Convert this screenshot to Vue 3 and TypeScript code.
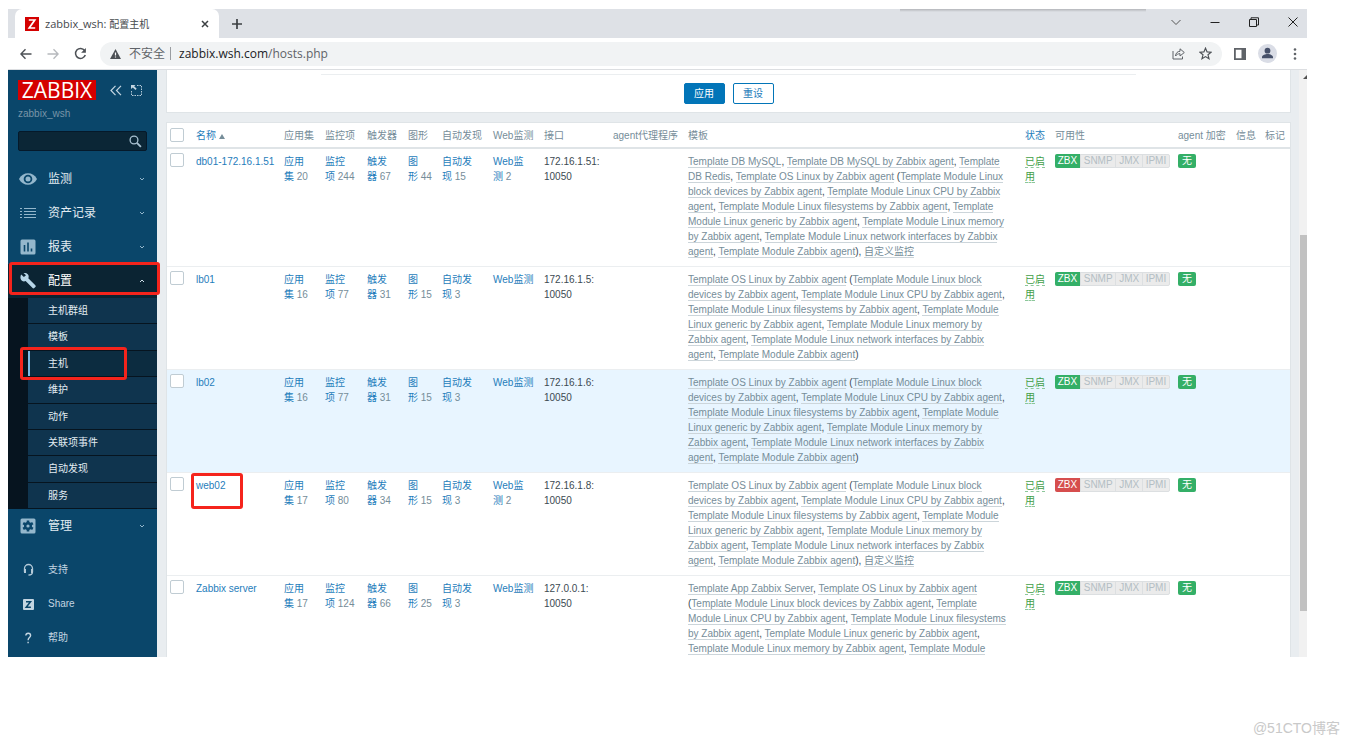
<script setup lang="ts">
interface Host {
  name: string
  apps: number
  items: number
  triggers: number
  graphs: number
  discovery: number
  web?: number
  ip: string
  templates: string
  down?: boolean
  hover?: boolean
  marked?: boolean
}

const modules = ['block devices', 'CPU', 'filesystems', 'generic', 'memory', 'network interfaces']
  .map((m) => `Template Module Linux ${m} by Zabbix agent`)
  .join(', ')
const linux = `Template OS Linux by Zabbix agent (${modules}, Template Module Zabbix agent)`

const hosts: Host[] = [
  { name: 'db01-172.16.1.51', apps: 20, items: 244, triggers: 67, graphs: 44, discovery: 15, web: 2, ip: '172.16.1.51', templates: `Template DB MySQL, Template DB MySQL by Zabbix agent, Template DB Redis, ${linux}, 自定义监控` },
  { name: 'lb01', apps: 16, items: 77, triggers: 31, graphs: 15, discovery: 3, ip: '172.16.1.5', templates: linux },
  { name: 'lb02', apps: 16, items: 77, triggers: 31, graphs: 15, discovery: 3, ip: '172.16.1.6', templates: linux, hover: true },
  { name: 'web02', apps: 17, items: 80, triggers: 34, graphs: 15, discovery: 3, web: 2, ip: '172.16.1.8', templates: `${linux}, 自定义监控`, down: true, marked: true },
  { name: 'Zabbix server', apps: 17, items: 124, triggers: 66, graphs: 25, discovery: 3, ip: '127.0.0.1', templates: `Template App Zabbix Server, ${linux}` },
]

const split = (s: string): string[] => s.split(/(Template [^,()]*[^,() ]|自定义监控)/).filter(Boolean)
const isLink = (s: string): boolean => /^(Template|自)/.test(s)

const topMenu = [
  { label: '监测', icon: 'eye' },
  { label: '资产记录', icon: 'list' },
  { label: '报表', icon: 'chart' },
]
const subMenu = ['主机群组', '模板', '主机', '维护', '动作', '关联项事件', '自动发现', '服务']
const nb = '\u00a0'
</script>

<template>
  <div class="page">
    <div class="window">
      <header class="tabs">
        <div class="tab">
          <svg class="favicon" viewBox="0 0 14 14"><rect width="14" height="14" fill="#d40000" /><path d="M3.8 3h6L4.200 11h6" fill="none" stroke="#fff" stroke-width="1.7" /></svg>
          <span class="tab-title">zabbix_wsh: <small>配置主机</small></span>
          <button class="icon-btn" aria-label="关闭标签页"><svg width="8" height="8" viewBox="0 0 8 8"><path d="M1 1l6 6M7 1L1 7" stroke="#3c4043" stroke-width="1.5" /></svg></button>
        </div>
        <button class="icon-btn plus" aria-label="新标签页"><svg width="12" height="12" viewBox="0 0 12 12"><path d="M6 1v10M1 6h10" stroke="#3c4043" stroke-width="1.7" /></svg></button>
        <div class="shade"></div>
        <div class="win-btns">
          <button class="icon-btn" aria-label="搜索标签页"><svg width="10" height="10" viewBox="0 0 10 10"><path d="M.5 3L5 7.500 9.500 3" fill="none" stroke="#555" /></svg></button>
          <button class="icon-btn" aria-label="最小化"><svg width="10" height="10" viewBox="0 0 10 10"><path d="M.5 5.500h9" stroke="#222" /></svg></button>
          <button class="icon-btn" aria-label="还原"><svg width="10" height="10" viewBox="0 0 10 10"><path d="M.5 2.500h7v7h-7zM2 2.500V.8h7.500V8h-2" fill="none" stroke="#222" /></svg></button>
          <button class="icon-btn" aria-label="关闭"><svg width="10" height="10" viewBox="0 0 10 10"><path d="M.5.5l9 9M9.500.5l-9 9" stroke="#222" /></svg></button>
        </div>
      </header>

      <div class="toolbar">
        <div class="nav-btns">
          <button class="icon-btn" aria-label="后退"><svg width="12" height="12" viewBox="0 0 12 12"><path d="M11.500 6H1M5.500 1.200L.9 6l4.600 4.800" fill="none" stroke="#4d5156" stroke-width="1.400" /></svg></button>
          <button class="icon-btn" aria-label="前进"><svg width="12" height="12" viewBox="0 0 12 12"><path d="M.5 6H11M6.500 1.200L11.100 6l-4.600 4.800" fill="none" stroke="#b6b9bd" stroke-width="1.300" /></svg></button>
          <button class="icon-btn" aria-label="刷新"><svg width="13" height="13" viewBox="0 0 13 13"><path d="M10.600 3.500A5 5 0 1 0 11.300 8" fill="none" stroke="#4d5156" stroke-width="1.500" /><path d="M11.900.9v4.800H7.100z" fill="#4d5156" /></svg></button>
        </div>
        <div class="address">
          <svg width="11" height="10" viewBox="0 0 11 10"><path d="M5.500 0L11 10H0z" fill="#4d5156" /><path d="M5.500 3.500v3M5.500 7.400v1.200" stroke="#fff" stroke-width="1.200" /></svg>
          <span class="unsafe">不安全</span><span class="bar"></span>
          <span class="url">zabbix.wsh.com<i>/hosts.php</i></span>
          <span class="addr-right">
            <svg width="13" height="13" viewBox="0 0 13 13"><path d="M1 4v8h9.500V9.500" fill="none" stroke="#5f6368" /><path d="M3.500 9c.3-3 2-4.600 4.500-4.700V1.800L12.300 5.500 8 9V6.700C6 6.700 4.800 7.400 3.500 9z" fill="none" stroke="#5f6368" /></svg>
            <svg width="13" height="13" viewBox="0 0 13 13"><path d="M6.500 1.200l1.600 3.700 4 .3-3.100 2.600 1 3.900-3.500-2.100L3 11.700l1-3.900L.9 5.200l4-.3z" fill="none" stroke="#4d5156" stroke-width="1.200" /></svg>
          </span>
        </div>
        <svg class="panel-ico" width="12" height="12" viewBox="0 0 12 12"><path d="M0 0h12v12H0zM1.800 1.800v8.400H7.500V1.800z" fill="#5f6368" fill-rule="evenodd" /></svg>
        <svg class="avatar" width="19" height="19" viewBox="0 0 19 19"><circle cx="9.500" cy="9.500" r="9.500" fill="#dadde6" /><circle cx="9.500" cy="6.700" r="2.900" fill="#465069" /><path d="M4 14.300v-1.200c0-2 3.600-3 5.500-3s5.500 1 5.500 3v1.200z" fill="#465069" /></svg>
        <button class="icon-btn" aria-label="菜单"><svg width="4" height="12" viewBox="0 0 4 12" fill="#5f6368"><circle cx="2" cy="1.500" r="1.300" /><circle cx="2" cy="6" r="1.300" /><circle cx="2" cy="10.500" r="1.300" /></svg></button>
      </div>

      <div class="content">
        <aside class="sidebar">
          <div class="brand">
            <a href="#" class="logo">ZABBIX</a>
            <button class="icon-btn" aria-label="收起侧边栏"><svg width="12" height="11" viewBox="0 0 12 11"><path d="M5.500.8L1 5.500l4.500 4.700M11 .8L6.500 5.500l4.500 4.700" fill="none" stroke="#c3d5e1" stroke-width="1.200" /></svg></button>
            <button class="icon-btn" aria-label="隐藏侧边栏"><svg width="11" height="11" viewBox="0 0 11 11"><path d="M6 .5h4.500v10H.5V6" fill="none" stroke="#b4cad8" stroke-dasharray="1.500 1" /><path d="M0 0h4.500L3.200 1.300l2.500 2.500-1.200 1.200-2.700-2.600L0 4z" fill="#c3d5e1" /></svg></button>
          </div>
          <div class="server">zabbix_wsh</div>
          <form class="search" @submit.prevent>
            <input type="text" aria-label="搜索" />
            <button class="icon-btn" aria-label="搜索"><svg width="13" height="13" viewBox="0 0 13 13"><circle cx="5" cy="5" r="3.900" fill="none" stroke="#a9c2d2" stroke-width="1.300" /><path d="M7.900 7.900l4 4" stroke="#a9c2d2" stroke-width="1.800" /></svg></button>
          </form>
          <nav>
            <a v-for="m in topMenu" :key="m.label" href="#" class="menu">
              <svg v-if="m.icon === 'eye'" viewBox="0 0 20 16"><path d="M1 8C4.500.3 15.500.3 19 8c-3.500 7.700-14.500 7.700-18 0z" fill="#94b7cc" /><circle cx="10" cy="8" r="4.300" fill="#0a466a" /><circle cx="10" cy="8" r="2.500" fill="#94b7cc" /></svg>
              <svg v-else-if="m.icon === 'list'" viewBox="0 0 20 16"><path d="M2 3.500h2M6 3.500h12M2 6.500h2M6 6.500h12M2 9.500h2M6 9.500h12M2 12.500h2M6 12.500h12" stroke="#94b7cc" stroke-width="1.200" /></svg>
              <svg v-else viewBox="0 0 20 16"><rect x="2.500" y=".5" width="15" height="15" rx="1.500" fill="#94b7cc" /><path d="M6.500 6v6.500M10 3.500v9M13.500 9.500v3" stroke="#0a466a" stroke-width="1.600" /></svg>
              <span>{{ m.label }}</span>
              <svg class="chev" viewBox="0 0 6 4"><path d="M1 1l2 2 2-2" fill="none" stroke="#94b7cc" /></svg>
            </a>
            <a href="#" class="menu open">
              <svg viewBox="0 0 20 16"><path d="M3.200 1.500l2.700 2.600L8 2.200 5.500.1c2-.6 4.700.5 5.100 2.700.2 1 0 1.900-.3 2.500l7 7c.6.6.6 1.200 0 1.700l-1 1.100c-.6.5-1.200.5-1.700 0l-7-7.100C5.500 9 3.400 7.900 2.700 5.900c-.5-1.500-.3-3.200.5-4.400z" fill="#b7d6e8" /></svg>
              <span>配置</span>
              <svg class="chev" viewBox="0 0 6 4"><path d="M1 3l2-2 2 2" fill="none" stroke="#cfe0ea" /></svg>
            </a>
            <ul class="sub">
              <li v-for="s in subMenu" :key="s" :class="{ current: s === '主机' }"><a href="#">{{ s }}</a></li>
            </ul>
            <a href="#" class="menu">
              <svg viewBox="0 0 20 16"><rect x="2.500" y=".5" width="15" height="15" rx="1.500" fill="#94b7cc" /><circle cx="10" cy="8" r="4" fill="#0a466a" /><path d="M10 2.500v11M5.200 5.200l9.600 5.600M14.800 5.200l-9.600 5.600" stroke="#0a466a" stroke-width="2.600" /><circle cx="10" cy="8" r="1.600" fill="#94b7cc" /></svg>
              <span>管理</span>
              <svg class="chev" viewBox="0 0 6 4"><path d="M1 1l2 2 2-2" fill="none" stroke="#94b7cc" /></svg>
            </a>
            <div class="extra">
              <a href="#" class="menu small"><svg viewBox="0 0 20 16"><path d="M6.500 10V6.500a4 4 0 0 1 8 0V10c0 2-1.500 3-4 3" fill="none" stroke="#b4cad8" stroke-width="1.300" /><path d="M6 7h2v4H6zM13 7h2v4h-2z" fill="#b4cad8" /></svg><span>支持</span></a>
              <a href="#" class="menu small"><svg viewBox="0 0 20 16"><rect x="5" y="3" width="11" height="11" rx="1" fill="#c3d5e1" /><path d="M8 5.800h4.500L8.200 11.200h4.700" fill="none" stroke="#0a466a" stroke-width="1.500" /></svg><span>Share</span></a>
              <a href="#" class="menu small"><svg viewBox="0 0 20 16"><path d="M7.800 5.500c.2-3 4.800-3 4.800 0 0 2.200-2.500 2-2.500 4.700M10.100 11.700v1.600" fill="none" stroke="#c3d5e1" stroke-width="1.400" /></svg><span>帮助</span></a>
            </div>
          </nav>
        </aside>

        <main class="main">
          <section class="filter">
            <div class="rule"></div>
            <div class="filter-btns">
              <button class="btn primary">应用</button>
              <button class="btn">重设</button>
            </div>
          </section>
          <section class="list">
            <table>
              <colgroup>
                <col class="c-check" /><col class="c-name" /><col class="c-apps" /><col class="c-items" /><col class="c-apps" /><col class="c-graphs" /><col class="c-disc" /><col class="c-disc" /><col class="c-if" /><col class="c-proxy" /><col /><col class="c-status" /><col class="c-avail" /><col class="c-enc" /><col class="c-info" /><col class="c-status" />
              </colgroup>
              <thead>
                <tr>
                  <th><input type="checkbox" aria-label="全选" /></th>
                  <th><a href="#">名称<svg class="sort" viewBox="0 0 6 5"><path d="M3 0l3 5H0z" fill="#768d99" /></svg></a></th>
                  <th>应用集</th><th>监控项</th><th>触发器</th><th>图形</th><th>自动发现</th><th>Web监测</th><th>接口</th>
                  <th>agent代理程序</th><th>模板</th><th><a href="#">状态</a></th><th>可用性</th><th>agent 加密</th><th>信息</th><th>标记</th>
                </tr>
              </thead>
              <tbody>
                <tr v-for="h in hosts" :key="h.name" :class="{ hover: h.hover }">
                  <td><input type="checkbox" :aria-label="h.name" /></td>
                  <td><a href="#" :class="{ marked: h.marked }">{{ h.name }}</a></td>
                  <td><a href="#">应用集</a><sup>{{ nb + h.apps }}</sup></td>
                  <td><a href="#">监控项</a><sup>{{ nb + h.items }}</sup></td>
                  <td><a href="#">触发器</a><sup>{{ nb + h.triggers }}</sup></td>
                  <td><a href="#">图形</a><sup>{{ nb + h.graphs }}</sup></td>
                  <td><a href="#">自动发现</a><sup>{{ nb + h.discovery }}</sup></td>
                  <td><a href="#">Web监测</a><sup v-if="h.web">{{ nb + h.web }}</sup></td>
                  <td>{{ h.ip }}:<wbr />10050</td>
                  <td></td>
                  <td class="tpl"><template v-for="(p, i) in split(h.templates)" :key="i"><a v-if="isLink(p)" href="#">{{ p }}</a><template v-else>{{ p }}</template></template></td>
                  <td><a href="#" class="enabled">已启用</a></td>
                  <td><div class="avail"><span :class="h.down ? 'bad' : 'ok'">ZBX</span><span>SNMP</span><span>JMX</span><span>IPMI</span></div></td>
                  <td><span class="none">无</span></td>
                  <td></td>
                  <td></td>
                </tr>
              </tbody>
            </table>
          </section>
        </main>
        <div class="scroll"><svg class="up" viewBox="0 0 4 4"><path d="M4 0v4H0z" fill="#505050" /></svg><div class="thumb"></div></div>
      </div>
    </div>
    <footer>@51CTO博客</footer>
  </div>
</template>

<style>
body {
  background: #fff;
  overflow: hidden;
}
</style>

<style scoped>
*,
*::after {
  box-sizing: border-box;
}
.page {
  display: flex;
  flex-direction: column;
  height: 100vh;
  padding: 9px 42px 0 8px;
  font: 10px/15px "Liberation Sans", "Noto Sans CJK SC", sans-serif;
  color: #3c4a52;
}
a {
  text-decoration: none;
  color: #1f7dbb;
}
svg {
  display: block;
  flex: none;
}
.icon-btn {
  display: flex;
  align-items: center;
  justify-content: center;
  padding: 0;
  border: 0;
  background: none;
}
.window {
  flex: 1;
  min-height: 0;
  display: flex;
  flex-direction: column;
  overflow: hidden;
}
.tabs {
  position: relative;
  display: flex;
  align-items: center;
  height: 29px;
  padding-left: 7px;
  background: #dee1e6;
  flex: none;
}
.tab {
  display: flex;
  align-items: center;
  width: 204px;
  height: 29px;
  padding: 0 10px;
  background: #fff;
  border-radius: 7px 7px 0 0;
}
.favicon {
  width: 14px;
  height: 14px;
}
.tab-title {
  flex: 1;
  margin-left: 6px;
  font: 11px/16px "Open Sans", "Noto Sans CJK SC", sans-serif;
  color: #45494d;
}
.tab-title small {
  font-size: 10px;
}
.plus {
  margin-left: 12px;
}
.shade {
  position: absolute;
  top: 0;
  right: 161px;
  width: 246px;
  height: 3px;
  background: linear-gradient(#b4b6ba, #dee1e6);
}
.win-btns {
  display: flex;
  gap: 29px;
  margin-left: auto;
  padding: 0 9px 4px 0;
}
.toolbar {
  display: flex;
  align-items: center;
  height: 32px;
  padding: 0 10px 0 12px;
  border-bottom: 1px solid #dcdee1;
  background: #fff;
  flex: none;
}
.nav-btns {
  display: flex;
  gap: 15px;
}
.address {
  flex: 1;
  display: flex;
  align-items: center;
  height: 24px;
  margin: 0 12px 0 13px;
  padding: 0 10px 0 10px;
  border-radius: 12px;
  background: #f1f3f4;
  font: 12px/18px "Open Sans", "Noto Sans CJK SC", sans-serif;
}
.unsafe {
  margin-left: 8px;
  color: #5f6368;
}
.bar {
  width: 1px;
  height: 13px;
  margin: 0 8px 0 5px;
  background: #9a9da1;
}
.url {
  color: #202124;
}
.url i {
  font-style: normal;
  color: #5f6368;
}
.addr-right {
  display: flex;
  gap: 14px;
  margin-left: auto;
}
.avatar {
  margin: 0 16px 0 12px;
}
.content {
  flex: 1;
  min-height: 0;
  display: flex;
  background: #e9edf0;
}
.sidebar {
  position: relative;
  z-index: 1;
  flex: none;
  width: 149px;
  background: #0a466a;
}
.brand {
  display: flex;
  align-items: center;
  gap: 9px;
  padding: 10px 10px 0;
}
.logo {
  width: 78px;
  margin-right: 5px;
  background: #d40000;
  color: #fff;
  font: 21px/20px "Open Sans", sans-serif;
  text-align: center;
}
.server {
  padding: 6px 10px 0;
  color: #7895a8;
}
.search {
  display: flex;
  align-items: center;
  height: 20px;
  margin: 10px 10px 11px;
  padding-right: 4px;
  border: 1px solid #05192a;
  border-radius: 2px;
  background: #0b2636;
}
.search input {
  flex: 1;
  min-width: 0;
  border: 0;
  padding: 0 4px;
  background: none;
  color: #fff;
  font: inherit;
  outline: 0;
}
.menu {
  position: relative;
  display: flex;
  align-items: center;
  height: 34px;
  padding: 0 12px 0 10px;
  color: #e2ecf2;
  font-size: 12px;
  line-height: 18px;
}
.menu svg {
  width: 20px;
  height: 16px;
}
.menu span {
  flex: 1;
  margin-left: 10px;
}
.menu .chev {
  width: 6px;
  height: 4px;
}
.open {
  background: #0b2433;
  color: #fff;
}
.open::after {
  content: "";
  position: absolute;
  inset: -2px -3px 3px 1px;
  border: 3px solid #f5241c;
  border-radius: 3px;
}
.sub {
  display: grid;
  grid-auto-rows: 1fr;
  height: 211px;
  margin: 0;
  padding: 0 0 0 20px;
  background: #06141f;
  list-style: none;
}
.sub li {
  position: relative;
  border-bottom: 1px solid #06141f;
  background: #0f344e;
}
.sub a {
  display: block;
  padding-left: 20px;
  line-height: 25px;
  color: #e2ecf2;
}
.sub .current {
  z-index: 1;
  background: #0c2c40;
}
.current a {
  padding-left: 18px;
  border-left: 2px solid #7cbbe6;
}
.current::after {
  content: "";
  position: absolute;
  inset: -4px 30px -4px -8px;
  border: 3px solid #f5241c;
  border-radius: 3px;
}
.extra {
  margin-top: 10px;
}
.small {
  font-size: 10px;
  color: #c3d5e1;
}
.main {
  flex: 1;
  min-width: 0;
  display: flex;
  flex-direction: column;
  gap: 9px;
  padding: 0 8px 0 9px;
  overflow: hidden;
}
.filter {
  flex: none;
  height: 43px;
  border: 1px solid #dfe4e7;
  border-top: 0;
  background: #fff;
}
.rule {
  height: 1px;
  margin: 4px 154px 8px;
  background: #ebeef0;
}
.filter-btns {
  display: flex;
  justify-content: center;
  gap: 8px;
}
.btn {
  width: 41px;
  height: 21px;
  padding: 0;
  border: 1px solid #0275b8;
  border-radius: 2px;
  background: #fff;
  color: #1f7dbb;
  font: inherit;
}
.btn.primary {
  background: #0275b8;
  color: #fff;
}
.list {
  flex: 1;
  border: 1px solid #dfe4e7;
  border-bottom: 0;
  background: #fff;
}
table {
  width: 100%;
  table-layout: fixed;
  border-collapse: separate;
  border-spacing: 0;
}
.c-check {
  width: 24px;
}
.c-name {
  width: 88px;
}
.c-apps {
  width: 41px;
}
.c-items {
  width: 42px;
}
.c-graphs {
  width: 34px;
}
.c-disc {
  width: 51px;
}
.c-if {
  width: 69px;
}
.c-proxy {
  width: 75px;
}
.c-status {
  width: 30px;
}
.c-avail {
  width: 123px;
}
.c-enc {
  width: 58px;
}
.c-info {
  width: 29px;
}
th {
  height: 26px;
  padding: 0 0 0 5px;
  border-bottom: 2px solid #dfe4e7;
  font-weight: normal;
  text-align: left;
  color: #768d99;
  white-space: nowrap;
}
td {
  padding: 5px 0 7px 5px;
  border-bottom: 1px solid #ebeef0;
  vertical-align: top;
}
th:first-child,
td:first-child {
  padding-left: 3px;
}
input[type="checkbox"] {
  appearance: none;
  display: block;
  width: 14px;
  height: 14px;
  margin: 0;
  border: 1px solid #c0ccd3;
  border-radius: 2px;
  background: #fff;
}
td:first-child {
  padding-top: 4px;
}
.sort {
  display: inline-block;
  width: 6px;
  height: 5px;
  margin-left: 3px;
}
.hover td {
  background: #e8f5ff;
}
sup {
  font-size: 10px;
  line-height: 15px;
  vertical-align: baseline;
  color: #768d99;
}
.marked {
  position: relative;
}
.marked::after {
  content: "";
  position: absolute;
  top: -7px;
  left: -5px;
  width: 52px;
  height: 36px;
  border: 3px solid #f5241c;
  border-radius: 3px;
}
td.tpl {
  padding-right: 10px;
}
.tpl a {
  border-bottom: 1px solid #ccd5da;
  color: #768d99;
}
.enabled {
  border-bottom: 1px dashed #8cc79a;
  color: #429e47;
}
.avail {
  display: flex;
  width: 115px;
  border: 1px solid #dcdfe1;
  border-radius: 2px;
  background: #ebebeb;
  color: #b3bec4;
  line-height: 12px;
}
.avail span {
  flex: 1 1 auto;
  text-align: center;
  border-left: 1px solid #dcdfe1;
}
.avail .ok,
.avail .bad {
  margin: -1px 0 -1px -1px;
  border: 0;
  border-radius: 2px 0 0 2px;
  background: #34af67;
  color: #fff;
  line-height: 14px;
}
.avail .bad {
  background: #d64e4e;
}
.none {
  display: block;
  width: 18px;
  border-radius: 2px;
  background: #34af67;
  color: #fff;
  line-height: 14px;
  text-align: center;
}
.scroll {
  flex: none;
  width: 8px;
  background: #f1f1f1;
}
.up {
  width: 4px;
  height: 4px;
  margin: 5px 0 0 auto;
}
.thumb {
  height: 64%;
  margin: 156px 0 0 1px;
  background: #c1c1c1;
}
footer {
  flex: none;
  height: 87px;
  margin-right: -33px;
  padding-top: 61px;
  font-size: 14px;
  line-height: 20px;
  text-align: right;
  color: #c9c9c9;
}
</style>
